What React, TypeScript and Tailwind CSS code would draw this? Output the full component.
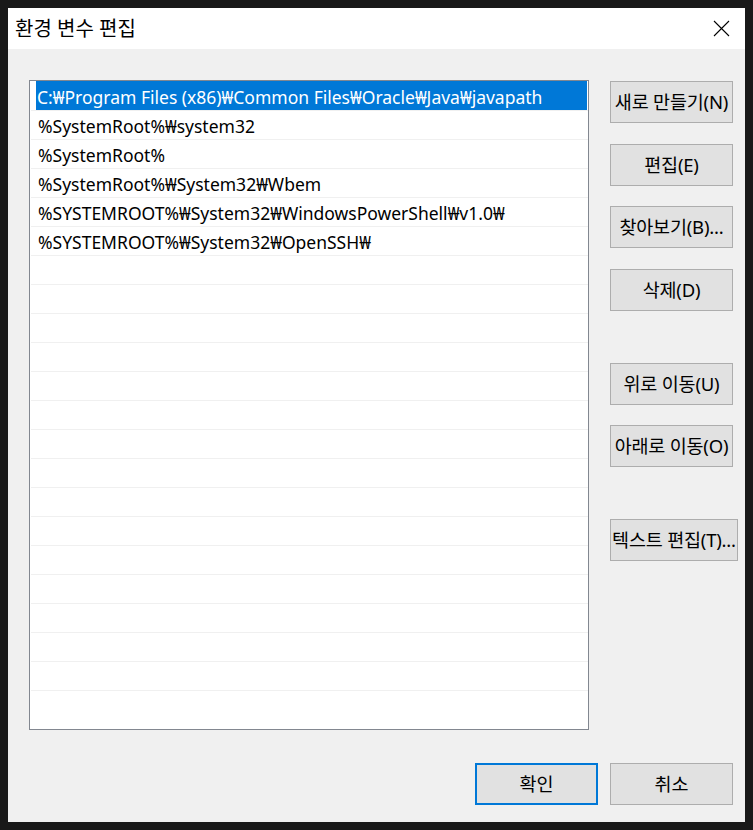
import React from "react";

const rows = [
  "C:₩Program Files (x86)₩Common Files₩Oracle₩Java₩javapath",
  "%SystemRoot%₩system32",
  "%SystemRoot%",
  "%SystemRoot%₩System32₩Wbem",
  "%SYSTEMROOT%₩System32₩WindowsPowerShell₩v1.0₩",
  "%SYSTEMROOT%₩System32₩OpenSSH₩",
];

const font = { fontFamily: '"Noto Sans", "Noto Sans CJK KR", sans-serif' };

function Btn({ label, cls }: { label: string; cls: string }) {
  return (
    <div
      className={`h-[42px] flex items-center justify-center bg-[#e1e1e1] border border-[#adadad] text-[18.5px] tracking-[-0.2px] text-black whitespace-nowrap ${cls}`}
    >
      {label}
    </div>
  );
}

export default function App() {
  const empty = Array.from({ length: 16 });
  return (
    <div className="w-[753px] h-[830px] bg-[#191919] p-2" style={font}>
      <div className="w-[737px] h-[814px] bg-[#f0f0f0] flex flex-col">
        <div className="h-[41px] bg-white flex items-center justify-between pl-[7px] pr-[8px]">
          <span className="text-[20px] text-black leading-none">환경 변수 편집</span>
          <svg width="17" height="17" viewBox="0 0 17 17" className="mr-[7px]">
            <path d="M1 1 L16 16 M16 1 L1 16" stroke="#000" strokeWidth="1.1" />
          </svg>
        </div>
        <div className="flex pl-[21px] pt-[31px]">
          <div className="w-[560px] h-[650px] border border-[#828790] bg-white overflow-hidden pl-[1px]">
            <div className="h-[29px] ml-[5px] mr-[1px] bg-[#0078d7] text-white text-[17.5px] flex items-center pl-[1px] pt-[3px] whitespace-nowrap">
              {rows[0]}
            </div>
            {rows.slice(1).map((r) => (
              <div
                key={r}
                className="h-[29px] border-t border-[#f0f0f0] text-[17.5px] text-black flex items-center pl-[7px] pt-[3px] whitespace-nowrap"
              >
                {r}
              </div>
            ))}
            {empty.map((_, i) => (
              <div key={i} className="h-[29px] border-t border-[#f0f0f0]" />
            ))}
          </div>
          <div className="flex flex-col ml-[21px] w-[123px]">
            <Btn label="새로 만들기(N)" cls="mt-[1px] w-[123px]" />
            <Btn label="편집(E)" cls="mt-[21px] w-[123px]" />
            <Btn label="찾아보기(B)..." cls="mt-[20px] w-[123px]" />
            <Btn label="삭제(D)" cls="mt-[21px] w-[123px]" />
            <Btn label="위로 이동(U)" cls="mt-[52px] w-[123px]" />
            <Btn label="아래로 이동(O)" cls="mt-[20px] w-[123px]" />
            <Btn label="텍스트 편집(T)..." cls="mt-[52px] w-[128px]" />
          </div>
        </div>
        <div className="flex justify-end gap-[12px] pr-[12px] mt-[33px]">
          <div className="w-[123px] h-[42px] flex items-center justify-center bg-[#e1e1e1] border-2 border-[#0078d7] text-[18.5px] text-black">
            확인
          </div>
          <div className="w-[123px] h-[42px] flex items-center justify-center bg-[#e1e1e1] border border-[#adadad] text-[18.5px] text-black">
            취소
          </div>
        </div>
      </div>
    </div>
  );
}
